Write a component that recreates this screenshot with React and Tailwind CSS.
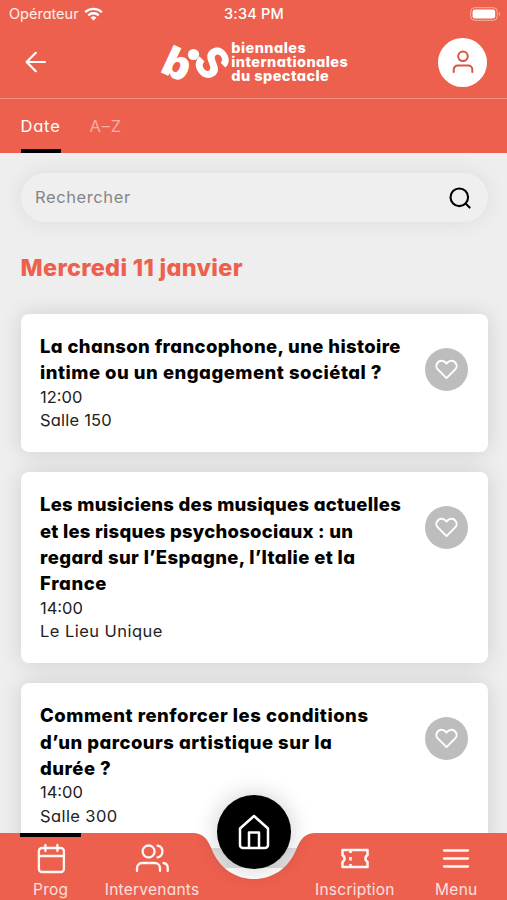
const sessions = [
  {
    id: 1,
    title: [
      { text: "La chanson francophone, une histoire", className: "tracking-[0.38px]" },
      { text: "intime ou un engagement sociétal ?", className: "tracking-[0.5px]" },
    ],
    time: "12:00",
    place: "Salle 150",
    placeClass: "tracking-[0.2px]",
  },
  {
    id: 2,
    title: [
      { text: "Les musiciens des musiques actuelles", className: "tracking-[0.27px]" },
      { text: "et les risques psychosociaux : un", className: "tracking-[0.25px]" },
      { text: "regard sur l’Espagne, l’Italie et la", className: "tracking-[0.4px]" },
      { text: "France", className: "tracking-[0.6px]" },
    ],
    time: "14:00",
    place: "Le Lieu Unique",
    placeClass: "tracking-[0.45px]",
  },
  {
    id: 3,
    title: [
      { text: "Comment renforcer les conditions", className: "tracking-[0.52px]" },
      { text: "d’un parcours artistique sur la", className: "tracking-[0.48px]" },
      { text: "durée ?", className: "tracking-[0.5px]" },
    ],
    time: "14:00",
    place: "Salle 300",
    placeClass: "tracking-[0.4px]",
  },
];

function StatusBar() {
  return (
    <div className="grid h-7 grid-cols-3 items-center pl-[9px] pr-[6px] text-[14.5px] text-white/90">
      <div className="flex items-center gap-[5px]">
        <span>Opérateur</span>
        <svg width="19" height="14" viewBox="0 0 19 14" fill="none" stroke="white" strokeWidth="2.3">
          <path d="M1.2 5.2a11.8 11.8 0 0 1 16.6 0" />
          <path d="M4.3 8.4a7.4 7.4 0 0 1 10.4 0" />
          <path d="M9.5 13.6 6.6 10.7a4.1 4.1 0 0 1 5.8 0z" fill="white" stroke="none" />
        </svg>
      </div>
      <span className="-ml-[2px] text-center font-medium tracking-[0.2px] text-white">3:34 PM</span>
      <svg className="justify-self-end" width="31" height="14" viewBox="0 0 31 14" fill="none">
        <rect x="0.7" y="0.7" width="26.6" height="12.6" rx="4" stroke="white" strokeOpacity="0.5" />
        <rect x="2.6" y="2.6" width="22.6" height="8.8" rx="2.2" fill="white" />
        <path d="M29 5v4c1.6-.6 1.6-3.4 0-4z" fill="white" fillOpacity="0.5" />
      </svg>
    </div>
  );
}

function Logo() {
  return (
    <div className="flex items-center gap-[3px] text-white">
      <svg width="68" height="46" viewBox="0 0 68 46" fill="white" className="overflow-visible">
        <text fontSize="42" fontWeight="900" transform="translate(-1 32.5) rotate(25)">b</text>
        <circle cx="33.5" cy="15.5" r="5.6" />
        <text fontSize="50" fontWeight="700" transform="translate(31 21) rotate(56) scale(1 1.2)">s</text>
      </svg>
      <div className="text-[14.5px] leading-[14.3px] font-extrabold tracking-[0.45px]">
        <p>biennales</p>
        <p>internationales</p>
        <p>du spectacle</p>
      </div>
    </div>
  );
}

function Header() {
  return (
    <header className="bg-[#ec604d]">
      <StatusBar />
      <div className="flex h-[71px] items-center justify-between border-b border-white/30 pb-[2px] pr-[19.5px] pl-[25px]">
        <svg width="22" height="22" viewBox="0 0 22 22" fill="none" stroke="white" strokeWidth="2.2" strokeLinecap="round" strokeLinejoin="round">
          <path d="M20 11H1.8M10.8 1.8 1.6 11l9.2 9.2" />
        </svg>
        <div className="ml-[23px]">
          <Logo />
        </div>
        <div className="flex size-[49px] items-center justify-center rounded-full bg-white">
          <svg width="22" height="24" viewBox="0 0 22 24" fill="none" stroke="#d95442" strokeWidth="2" strokeLinecap="round">
            <circle cx="11" cy="6.3" r="4.8" />
            <path d="M1.7 22v-2.5a4 4 0 0 1 4-4h10.6a4 4 0 0 1 4 4V22" />
          </svg>
        </div>
      </div>
      <nav className="flex h-[54px] gap-[29px] pl-[20.5px] text-[16.5px] tracking-[0.8px] text-white">
        <span className="flex items-center border-b-4 border-black pt-1">Date</span>
        <span className="flex items-center pt-px text-white/50">A–Z</span>
      </nav>
    </header>
  );
}

function SearchBar() {
  return (
    <div className="mr-[19.5px] ml-[20.5px] mt-5 flex h-[49px] items-center justify-between rounded-full bg-[#efefef] pr-[17px] pl-[14.5px] shadow-[0_0_22px_rgba(0,0,0,0.08)]">
      <span className="text-[16.5px] tracking-[0.6px] text-[#858585]">Rechercher</span>
      <svg width="22" height="22" viewBox="0 0 22 22" fill="none" stroke="black" strokeWidth="2.1" strokeLinecap="round">
        <circle cx="10.3" cy="10.3" r="8.8" />
        <path d="m16.6 16.6 4 4" />
      </svg>
    </div>
  );
}

function SessionCard({ session }) {
  return (
    <article className="flex justify-between rounded-[8px] bg-white px-[19.5px] pt-[19px] pb-5 shadow-[0_0_22px_rgba(0,0,0,0.13)]">
      <div className="whitespace-nowrap">
        <h3 className="text-[18.5px] leading-[26.4px] font-extrabold text-black">
          {session.title.map((line) => (
            <span key={line.text} className={`block ${line.className}`}>
              {line.text}
            </span>
          ))}
        </h3>
        <p className="text-[16.5px] leading-[23.2px] text-[#222]">{session.time}</p>
        <p className={`text-[16.5px] leading-[23.2px] text-[#222] ${session.placeClass}`}>{session.place}</p>
      </div>
      <div className="mt-[14.5px] flex size-[43px] shrink-0 items-center justify-center rounded-full bg-[#bdbdbd]">
        <svg width="23" height="21" viewBox="0 0 24 22" fill="none" stroke="white" strokeWidth="2.1" strokeLinejoin="round">
          <path d="M12 20 2.9 10.9A5.2 5.2 0 0 1 2.9 3.6 5.2 5.2 0 0 1 10.3 3.2L12 4.8l1.7-1.6a5.2 5.2 0 0 1 7.4.4 5.2 5.2 0 0 1 0 7.3z" />
        </svg>
      </div>
    </article>
  );
}

function TabItem({ label, active, children }) {
  return (
    <div className="relative flex flex-col items-center">
      {active && <span className="absolute top-0 h-[4px] w-[61px] bg-black" />}
      <svg className="mt-[10px]" width="34" height="32" viewBox="0 0 34 32" fill="none" stroke="white" strokeOpacity="0.95" strokeWidth="2.3" strokeLinecap="round" strokeLinejoin="round">
        {children}
      </svg>
      <span className="mt-[4px] text-[15.5px] leading-[22px] tracking-[0.25px] text-white/80">{label}</span>
    </div>
  );
}

function TabBar() {
  return (
    <div className="absolute inset-x-0 bottom-0 h-[67px]">
      {/* bar with a notch for the home button */}
      <svg className="absolute inset-0" width="507" height="67" viewBox="0 0 507 67">
        <path
          d="M0 0H192C204 0 208 7 212 17C220 36 236 46 254 46C272 46 288 36 296 17C300 7 304 0 316 0H507V67H0Z"
          fill="#ec604d"
        />
      </svg>
      <div className="relative grid h-full grid-cols-5">
        <TabItem label="Prog" active>
          <rect x="4.9" y="5" width="25" height="24" rx="3" />
          <path d="M4.9 13h25M11.4 2v6M23.4 2v6" />
        </TabItem>
        <TabItem label="Intervenants">
          <circle cx="13.6" cy="8.5" r="6" />
          <path d="M2 28v-3a5 5 0 0 1 5-5h13a5 5 0 0 1 5 5v3M22.5 2.6a6 6 0 0 1 0 11.8M28.5 20a5 5 0 0 1 4.2 5v3" />
        </TabItem>
        <div />
        <TabItem label="Inscription">
          <path d="M4.5 7h25v5a4 4 0 0 0 0 7v5h-25v-5a4 4 0 0 0 0-7zM12.5 7v3M12.5 14v3.5M12.5 21v3" strokeWidth="2.6" strokeLinecap="butt" />
        </TabItem>
        <TabItem label="Menu">
          <path d="M5 7.5h24M5 15.5h24M5 23.5h24" />
        </TabItem>
      </div>
      <button className="absolute -top-[38px] left-[217px] flex size-[74px] items-center justify-center rounded-full bg-black shadow-[0_0_24px_rgba(0,0,0,0.2)]">
        <svg width="34" height="38" viewBox="0 0 34 38" fill="none" stroke="white" strokeWidth="2.5" strokeLinejoin="round">
          <path d="M3 15.5 17 3l14 12.5V32a3 3 0 0 1-3 3H6a3 3 0 0 1-3-3zM12 35V19.5h10V35" />
        </svg>
      </button>
    </div>
  );
}

export default function App() {
  return (
    <div className="relative h-[900px] w-[507px] overflow-hidden bg-[#eee] font-['Inter','Noto_Sans',sans-serif] [font-feature-settings:'cv11']">
      <Header />
      <SearchBar />
      <h2 className="mx-[20.5px] mt-[30px] text-[23.5px] leading-8 font-extrabold tracking-[0.3px] text-[#ec604d]">
        Mercredi 11 janvier
      </h2>
      <main className="mr-[19.5px] ml-[20.5px] mt-[30px] flex flex-col gap-5">
        {sessions.map((session) => (
          <SessionCard key={session.id} session={session} />
        ))}
        <div className="h-20 rounded-[8px] bg-white shadow-[0_0_22px_rgba(0,0,0,0.13)]" />
      </main>
      <TabBar />
    </div>
  );
}
